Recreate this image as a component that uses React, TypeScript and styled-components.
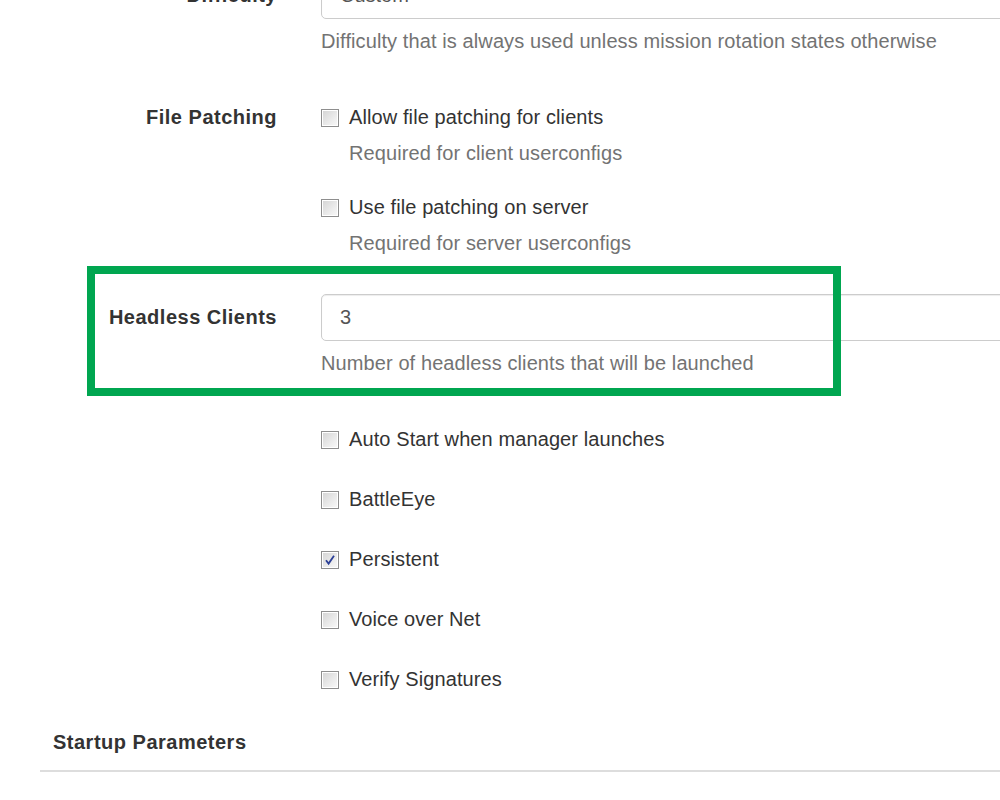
import React from "react";
import styled, { createGlobalStyle } from "styled-components";

const Global = createGlobalStyle`
  html, body { margin: 0; padding: 0; overflow: hidden; background: #fff; }
  body { font-family: "Liberation Sans", Arial, sans-serif; color: #333; }
`;

const Page = styled.div`
  width: 1180px;
  margin-top: -28px;
`;

const FormGroup = styled.div<{ $check?: boolean }>`
  position: relative;
  display: grid;
  grid-template-columns: 277px 1fr;
  column-gap: 44px;
  margin-bottom: 37px;
  padding-top: ${(p) => (p.$check ? "12px" : "0")};
`;

const Label = styled.div<{ $check?: boolean }>`
  text-align: right;
  font-weight: bold;
  font-size: 20px;
  letter-spacing: 0.5px;
  line-height: 27px;
  color: #333;
  padding-top: ${(p) => (p.$check ? "0" : "10px")};
`;

const Control = styled.div`
  display: flex;
  flex-direction: column;
`;

const Input = styled.div`
  box-sizing: border-box;
  height: 47px;
  border: 1px solid #ccc;
  border-radius: 5px;
  box-shadow: inset 0 1px 1px rgba(0, 0, 0, 0.075);
  padding: 0 18px;
  display: flex;
  align-items: center;
  font-size: 20px;
  color: #555;
`;

const Help = styled.div<{ $indent?: boolean }>`
  margin-top: 9px;
  font-size: 20px;
  letter-spacing: 0.1px;
  line-height: 27px;
  color: #737373;
  padding-left: ${(p) => (p.$indent ? "28px" : "0")};
`;

const CheckItem = styled.div<{ $first?: boolean; $gap?: number }>`
  margin-top: ${(p) => (p.$first ? 0 : p.$gap ?? 27)}px;
`;

const CheckLine = styled.label`
  display: flex;
  align-items: center;
  gap: 10px;
  font-size: 20px;
  letter-spacing: 0.1px;
  line-height: 27px;
  color: #333;
`;

const Box = styled.span`
  box-sizing: border-box;
  width: 18px;
  height: 18px;
  border: 1px solid #8e8e8e;
  background: #fff;
  padding: 1px;
  display: inline-flex;
  flex: none;
`;

const BoxInner = styled.span`
  flex: 1;
  background: linear-gradient(135deg, #d6d6d6 0%, #eeeeee 70%, #f7f7f7 100%);
  display: flex;
  align-items: center;
  justify-content: center;
`;

const Highlight = styled.div`
  position: absolute;
  left: 87px;
  top: -28px;
  width: 754px;
  height: 130px;
  box-sizing: border-box;
  border: 8px solid #00a650;
  pointer-events: none;
`;

const SectionTitle = styled.div`
  margin-left: 53px;
  margin-top: -1px;
  font-size: 20px;
  letter-spacing: 0.5px;
  line-height: 27px;
  font-weight: bold;
  color: #333;
`;

const Rule = styled.div`
  margin: 14px 0 0 40px;
  height: 2px;
  background: #dddddd;
`;

const Checkbox: React.FC<{ checked?: boolean; label: string }> = ({ checked, label }) => (
  <CheckLine>
    <Box>
      <BoxInner>
        {checked && (
          <svg width="12" height="12" viewBox="0 0 12 12">
            <path d="M2 6.2 L4.6 9.6 L10 1.8" fill="none" stroke="#2b3f97" strokeWidth="1.8" />
          </svg>
        )}
      </BoxInner>
    </Box>
    {label}
  </CheckLine>
);

export default function App() {
  return (
    <>
      <Global />
      <Page>
        <FormGroup>
          <Label>Difficulty</Label>
          <Control>
            <Input>Custom</Input>
            <Help>Difficulty that is always used unless mission rotation states otherwise</Help>
          </Control>
        </FormGroup>

        <FormGroup $check>
          <Label $check>File Patching</Label>
          <Control>
            <CheckItem $first>
              <Checkbox label="Allow file patching for clients" />
              <Help $indent>Required for client userconfigs</Help>
            </CheckItem>
            <CheckItem>
              <Checkbox label="Use file patching on server" />
              <Help $indent>Required for server userconfigs</Help>
            </CheckItem>
          </Control>
        </FormGroup>

        <FormGroup>
          <Label>Headless Clients</Label>
          <Control>
            <Input>3</Input>
            <Help>Number of headless clients that will be launched</Help>
          </Control>
          <Highlight />
        </FormGroup>

        <FormGroup $check>
          <Label $check />
          <Control>
            <CheckItem $first>
              <Checkbox label="Auto Start when manager launches" />
            </CheckItem>
            <CheckItem $gap={33}>
              <Checkbox label="BattleEye" />
            </CheckItem>
            <CheckItem $gap={33}>
              <Checkbox checked label="Persistent" />
            </CheckItem>
            <CheckItem $gap={33}>
              <Checkbox label="Voice over Net" />
            </CheckItem>
            <CheckItem $gap={33}>
              <Checkbox label="Verify Signatures" />
            </CheckItem>
          </Control>
        </FormGroup>

        <SectionTitle>Startup Parameters</SectionTitle>
        <Rule />
      </Page>
    </>
  );
}
